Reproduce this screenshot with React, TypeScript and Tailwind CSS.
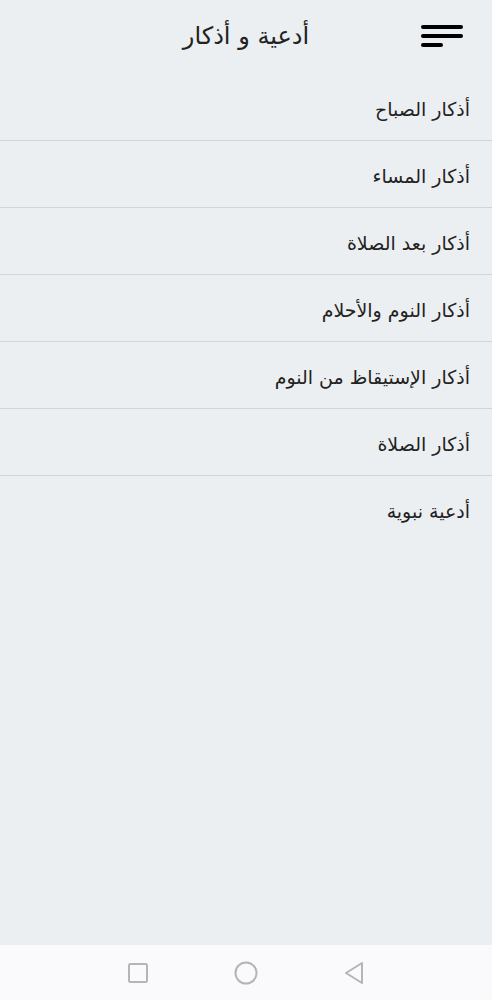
import React from 'react';

const ITEMS = [
  'أذكار الصباح',
  'أذكار المساء',
  'أذكار بعد الصلاة',
  'أذكار النوم والأحلام',
  'أذكار الإستيقاظ من النوم',
  'أذكار الصلاة',
  'أدعية نبوية',
];

const App: React.FC = () => {
  return (
    <div dir="rtl" className="w-[492px] h-[1000px] flex flex-col bg-[#eceff1] text-[#222] font-['DejaVu_Sans',sans-serif]">
      <header className="h-[74px] flex items-center justify-center relative shrink-0">
        <h1 className="text-[24px] leading-none pb-0.5">أدعية و أذكار</h1>
        <button dir="ltr" className="absolute right-[29px] top-[25px] w-[42px] flex flex-col items-start gap-[5px]">
          <span className="block w-[42px] h-[4px] rounded-full bg-black" />
          <span className="block w-[42px] h-[4px] rounded-full bg-black" />
          <span className="block w-[22px] h-[4px] rounded-full bg-black" />
        </button>
      </header>

      <ul className="flex-1">
        {ITEMS.map((item, i) => (
          <li
            key={item}
            className={`h-[67px] flex items-center pr-[22px] pt-1 text-[19px] ${i < ITEMS.length - 1 ? 'border-b border-[#d2d5d7]' : ''}`}
          >
            {item}
          </li>
        ))}
      </ul>

      <nav className="h-[55px] shrink-0 bg-[#fafafc] flex items-center justify-center gap-[85px]" dir="ltr">
        <svg width="22" height="22" viewBox="0 0 22 22" fill="none" stroke="#b5b5b8" strokeWidth="2">
          <rect x="2" y="2" width="18" height="18" rx="1.5" />
        </svg>
        <svg width="24" height="24" viewBox="0 0 24 24" fill="none" stroke="#b5b5b8" strokeWidth="2">
          <circle cx="12" cy="12" r="10.5" />
        </svg>
        <svg width="22" height="24" viewBox="0 0 22 24" fill="none" stroke="#b5b5b8" strokeWidth="2" strokeLinejoin="round">
          <path d="M19 2 L3 12 L19 22 Z" />
        </svg>
      </nav>
    </div>
  );
};

export default App;
